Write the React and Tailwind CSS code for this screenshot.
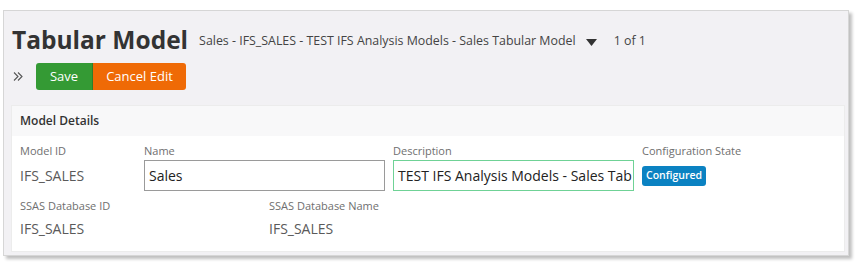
import React from 'react';

const Field = ({ label, children, className = '', gap = 'mt-[2px]' }) => (
  <div className={`flex flex-col ${className}`}>
    <span className="text-[11px] leading-[14px] text-[#6f6f6f]">{label}</span>
    <div className={gap}>{children}</div>
  </div>
);

export default function App() {
  return (
    <div className="w-[857px] h-[263px] bg-white pt-[10px] pl-[3px]" style={{ fontFamily: '"Open Sans", "Noto Sans", sans-serif' }}>
      <div className="w-[846px] h-[246px] bg-[#f2f1f4] border border-[#d6d6d6] shadow-[3px_3px_3px_rgba(0,0,0,0.25)] flex flex-col">
        {/* title row */}
        <div className="flex items-end pl-[8px] pt-[12px] h-[44px]">
          <h1 className="text-[24.5px] leading-[30px] font-bold text-[#333]">Tabular Model</h1>
          <span className="ml-[11px] mb-[4px] text-[12.4px] text-[#444]">Sales - IFS_SALES - TEST IFS Analysis Models - Sales Tabular Model</span>
          <svg className="ml-[10px] mb-[9px]" width="11" height="7" viewBox="0 0 11 7">
            <path d="M0 0 H11 L5.5 7 Z" fill="#333" />
          </svg>
          <span className="ml-[17px] mb-[4px] text-[12.4px] text-[#444]">1 of 1</span>
        </div>

        {/* toolbar */}
        <div className="flex items-center pl-[9px] mt-[8px] h-[27px]">
          <svg width="11" height="11" viewBox="0 0 11 11" fill="none" stroke="#555" strokeWidth="1.1">
            <path d="M1 1.5 L5 5.5 L1 9.5" />
            <path d="M5 1.5 L9 5.5 L5 9.5" />
          </svg>
          <div className="ml-[12px] flex rounded-[3px] overflow-hidden">
            <button className="w-[57px] h-[27px] bg-[#349a34] text-white text-[13px] border-r border-[#2c7f2c]">Save</button>
            <button className="w-[93px] h-[27px] bg-[#ef6a06] text-white text-[13px]">Cancel Edit</button>
          </div>
        </div>

        {/* card */}
        <div className="mt-[15px] ml-[7px] w-[834px] flex-1 mb-[3px] bg-white border border-[#ececec]">
          <div className="h-[30px] bg-[#f8f8f9] flex items-center pl-[8px] text-[12px] font-semibold text-[#333]">Model Details</div>
          <div className="pl-[8px] pt-[8px]">
            <div className="flex">
              <Field label="Model ID" className="w-[124px]">
                <div className="h-[31px] flex items-center text-[14px] text-[#5a5a5a]">IFS_SALES</div>
              </Field>
              <Field label="Name" className="w-[249px]">
                <div className="w-[241px] h-[31px] border border-[#9a9a9a] bg-white flex items-center px-[4px] text-[14px] text-[#222]">Sales</div>
              </Field>
              <Field label="Description" className="w-[249px]">
                <div className="w-[241px] h-[31px] border border-[#6fd296] bg-white flex items-center px-[4px] overflow-hidden">
                  <span className="text-[14px] text-[#222] whitespace-nowrap">TEST IFS Analysis Models - Sales Tab</span>
                </div>
              </Field>
              <Field label="Configuration State" className="w-[180px]">
                <div className="h-[31px] flex items-center">
                  <span className="h-[20px] px-[4px] rounded-[3px] bg-[#0b82c2] text-white text-[10.5px] font-semibold flex items-center">Configured</span>
                </div>
              </Field>
            </div>
            <div className="flex mt-[8px]">
              <Field label="SSAS Database ID" className="w-[249px]" gap="mt-[5px]">
                <div className="h-[20px] flex items-center text-[14px] text-[#5a5a5a]">IFS_SALES</div>
              </Field>
              <Field label="SSAS Database Name" className="w-[249px]" gap="mt-[5px]">
                <div className="h-[20px] flex items-center text-[14px] text-[#5a5a5a]">IFS_SALES</div>
              </Field>
            </div>
          </div>
        </div>
      </div>
    </div>
  );
}
